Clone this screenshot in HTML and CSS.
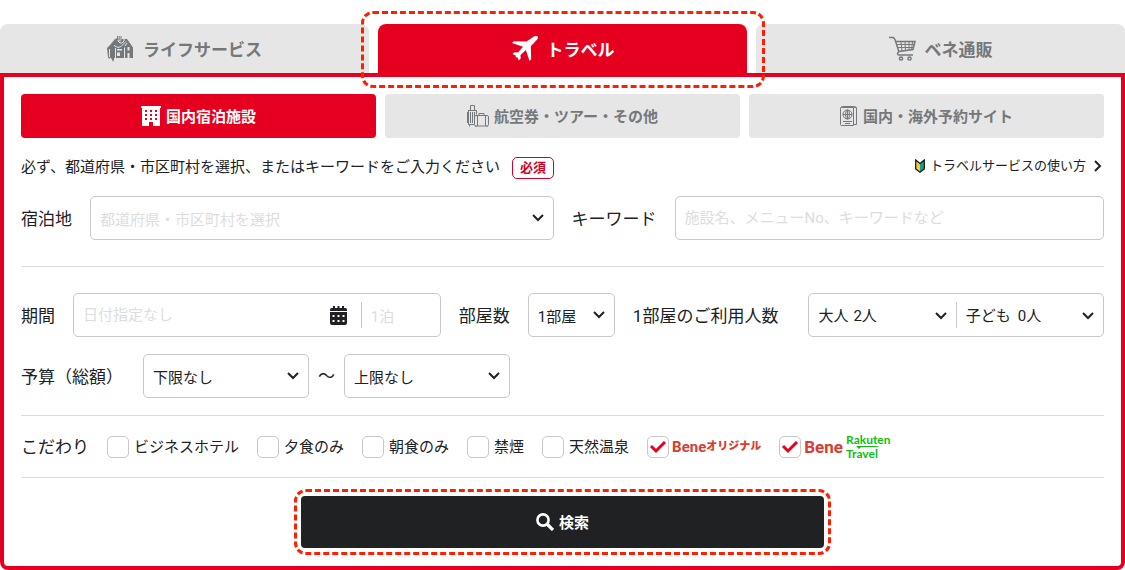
FILE: index.html
```html
<!DOCTYPE html>
<html lang="ja">
<head>
  <meta charset="UTF-8" />
  <meta name="viewport" content="width=device-width, initial-scale=1.0" />
  <title>トラベル検索</title>
  <link rel="stylesheet" href="styles.css">
</head>
<body>
  <nav class="tabs">
    <a href="#life" class="tab">
      <svg class="tab-icon" viewBox="0 0 27 26" aria-hidden="true">
        <path fill="currentColor" d="M0 12l3-3 5-6 3-1 2 4 2-3 5 0 6 8.500V22h-3.500v-5h-2v5H7v1.500L6 26l-1-2.500-1.500-2L2 23l-1-2z"/>
        <path fill="#e6e6e6" d="M20.500 11h2v3.500h-2zM10 13h5v1.500h-5zM10 16.500h3V20h-3z"/>
        <path d="M2.500 13v8M8.500 12v10M17.500 11.500V22M7 9.500l4 2 3-1 5-5M11 2v3l2 2h2l2-2V2M20 7l-2 3" fill="none" stroke="#e6e6e6"/>
        <path d="M10.500 0v4M14 0v5M12.200 0v4" fill="none" stroke="currentColor"/>
      </svg>
      <span>ライフサービス</span>
    </a>
    <a href="#travel" class="tab active">
      <svg class="tab-icon" viewBox="0 0 27 26" aria-hidden="true">
        <path fill="currentColor" d="M26 0c1.200.3 1.200 2 .2 3.400l-6.400 6.800.4 13-1.700 1.800-3.600-11-5.400 5 .2 3.500-1.900 2-1.600-3.500-.8.6-.9-.8.6-1L1.500 18l1.800-1.700 3.700.1 5-5.600L1 7l1.800-1.700 12.700.2 7-4.700C23.700.1 25.200-.2 26 0z"/>
      </svg>
      <span>トラベル</span>
    </a>
    <a href="#shop" class="tab">
      <svg class="tab-icon" viewBox="0 0 27 26" fill="none" stroke="currentColor" stroke-width="1.500" aria-hidden="true">
        <path d="M0 1.500h4.500l1.500 2 4 12.500M7 5.500h19l-2 8-14 2M10 16c-2 .5-2 3 0 3h14"/>
        <path stroke-width="1" d="M8 8.500h17M9 11.500h15.500M12 6l1 9M16 6l.5 9M20 6v8M23.500 6l-1 8"/>
        <circle cx="12" cy="22.500" r="1.600"/><circle cx="20.500" cy="22.500" r="1.600"/>
      </svg>
      <span>ベネ通販</span>
    </a>
  </nav>

  <main class="panel">
    <nav class="subtabs">
      <a href="#hotel" class="subtab active">
        <svg class="icon-building" viewBox="0 0 20 20" aria-hidden="true">
          <path fill="currentColor" fill-rule="evenodd" d="M0 0h20v2h-1v18h-7v-4H8v4H1V2H0zM4 4v2h2V4zM9 4v2h2V4zM14 4v2h2V4zM4 8v2h2V8zM9 8v2h2V8zM14 8v2h2V8zM4 12v2h2v-2zM9 12v2h2v-2zM14 12v2h2v-2z"/>
        </svg>
        <span>国内宿泊施設</span>
      </a>
      <a href="#air" class="subtab">
        <svg class="icon-luggage" viewBox="0 0 22 22" fill="none" stroke="currentColor" aria-hidden="true">
          <path d="M3.500 5V.5h4V5M1.500 5.500h8v3M1.500 5v14.500H7M.5 7v11M3.500 7v11M5.500 7v11M7.500 7v11M2.500 19.500v2M9.500 5.500v4"/>
          <rect x="7.500" y="10.500" width="14" height="10.500" rx="1.500"/>
          <path d="M12 10.500v-2h5v2M10.500 10.500V21M18.500 10.500V21M9 21v1M20 21v1"/>
        </svg>
        <span>航空券・ツアー・その他</span>
      </a>
      <a href="#site" class="subtab">
        <svg class="icon-passport" viewBox="0 0 18 20" fill="none" stroke="currentColor" aria-hidden="true">
          <path d="M1.500 1.500h12v18h-12q-1 0-1-1v-16q0-2 2-2h12l2 1v17h-3M14 1.500h2"/>
          <circle cx="7.500" cy="8.500" r="4.500"/><ellipse cx="7.500" cy="8.500" rx="2" ry="4.500"/>
          <path d="M3 8.500h9M7.500 4v9M3 15.500h9M5 17.500h5"/>
        </svg>
        <span>国内・海外予約サイト</span>
      </a>
    </nav>

    <form class="search" onsubmit="return false">
      <div class="notice">
        <p>必ず、都道府県・市区町村を選択、またはキーワードをご入力ください<span class="required">必須</span></p>
        <a href="#guide" class="guide">
          <svg class="icon-beginner" viewBox="0 0 10 14" aria-hidden="true">
            <path fill="#f8c63d" d="M.7 1L5 4.500V13L.7 10z"/><path fill="#16a085" d="M9.300 1L5 4.500V13l4.300-3z"/>
            <path fill="none" stroke="#111" stroke-width="1.200" d="M.7 1L5 4.500 9.300 1v9L5 13.200.7 10z"/>
          </svg>
          <span>トラベルサービスの使い方</span>
          <svg class="icon-next" viewBox="0 0 8 12" fill="none" stroke="currentColor" stroke-width="2" aria-hidden="true"><path d="M1 1l5 5-5 5"/></svg>
        </a>
      </div>

      <div class="row place-row">
        <label for="place">宿泊地</label>
        <select id="place" class="box place empty"><option>都道府県・市区町村を選択</option></select>
        <label for="keyword">キーワード</label>
        <input id="keyword" class="box keyword" type="text" placeholder="施設名、メニューNo、キーワードなど">
      </div>

      <div class="section">
        <div class="row">
          <label for="date">期間</label>
          <div class="box group period">
            <input id="date" type="text" placeholder="日付指定なし">
            <svg class="icon-calendar" viewBox="0 0 17 19" aria-hidden="true">
              <path fill="currentColor" fill-rule="evenodd" d="M3 0h2v2h2.500V0h2v2H12V0h2v2h1.500Q17 2 17 4v1H0V4q0-2 1.500-2H3zM0 6h17v11q0 2-2 2H2q-2 0-2-2zM2.500 9v2h2V9zM7.500 9v2h2V9zM12.500 9v2h2V9zM2.500 14v2h2v-2zM7.500 14v2h2v-2zM12.500 14v2h2v-2z"/>
            </svg>
            <input class="nights" type="text" placeholder="1泊" aria-label="泊数">
          </div>
          <label for="rooms">部屋数</label>
          <select id="rooms" class="box rooms"><option>1部屋</option></select>
          <label for="adults" class="guests-label">1部屋のご利用人数</label>
          <div class="box group guests">
            <label class="guest">大人<select id="adults"><option>2人</option></select></label>
            <label class="guest child">子ども<select><option>0人</option></select></label>
          </div>
        </div>
        <div class="row">
          <label for="min" class="budget-label">予算（総額）</label>
          <div class="range">
            <select id="min" class="box price"><option>下限なし</option></select>
            <span>～</span>
            <select class="box price" aria-label="上限"><option>上限なし</option></select>
          </div>
        </div>
      </div>

      <fieldset class="options">
        <span class="options-title">こだわり</span>
        <label><input type="checkbox">ビジネスホテル</label>
        <label><input type="checkbox">夕食のみ</label>
        <label><input type="checkbox">朝食のみ</label>
        <label><input type="checkbox">禁煙</label>
        <label><input type="checkbox">天然温泉</label>
        <label class="brand"><input type="checkbox" checked><span class="bene">Bene<small>オリジナル</small></span></label>
        <label class="brand"><input type="checkbox" checked><span class="bene-travel">Bene</span><span class="rakuten"><span>Rakuten</span><span>Travel</span>
          <svg class="swoosh" viewBox="0 0 24 3" aria-hidden="true"><path fill="currentColor" d="M0 0h24l-4 1H5L3 3z"/></svg></span></label>
      </fieldset>

      <div class="submit">
        <button type="submit">
          <svg class="icon-search" viewBox="0 0 18 18" fill="none" stroke="currentColor" aria-hidden="true">
            <circle cx="7" cy="7" r="5.600" stroke-width="2.600"/><path d="M11 11l6 6" stroke-width="3.200"/>
          </svg>
          <span>検索</span>
        </button>
      </div>
    </form>
  </main>
</body>
</html>
```
FILE: styles.css
```css
* {
  box-sizing: border-box;
}
body {
  margin: 0;
  padding-top: 24px;
  font-family: Roboto, "Noto Sans CJK JP", sans-serif;
  font-size: 15px;
  line-height: 22px;
  color: #202124;
  background: #fff;
}
a {
  color: inherit;
  text-decoration: none;
}
svg {
  display: block;
  flex: none;
}
input, select, button {
  font: inherit;
  color: inherit;
}

/* tabs */
.tabs {
  display: flex;
  gap: 9px;
}
.tab {
  position: relative;
  flex: 1;
  display: flex;
  align-items: center;
  justify-content: center;
  gap: 9px;
  height: 49px;
  border-radius: 8px 8px 0 0;
  background: #e6e6e6;
  color: #75787b;
  font-size: 17px;
  font-weight: bold;
}
.tab span, .subtab span, .submit span {
  padding-top: 2px;
}
.tab.active, .subtab.active {
  background: #e60020;
  color: #fff;
}
.tab.active::after, .submit button::after {
  content: "";
  position: absolute;
  border: 3px dashed #ff1e00;
  border-radius: 12px;
  pointer-events: none;
}
.tab.active::after {
  inset: -13px -18px -15px -17px;
  z-index: 1;
}
.tab-icon {
  width: 27px;
  height: 26px;
}

.panel {
  padding: 17px 17px 18px;
  border: 4px solid #e60020;
  border-radius: 0 0 8px 8px;
}
.subtabs {
  display: flex;
  gap: 9px;
}
.subtab {
  flex: 1;
  display: flex;
  align-items: center;
  justify-content: center;
  gap: 5px;
  height: 44px;
  border-radius: 4px;
  background: #e6e6e6;
  color: #75787b;
  font-weight: bold;
}
.icon-building { width: 20px; height: 20px; }
.icon-luggage { width: 22px; height: 22px; }
.icon-passport { width: 18px; height: 20px; }

/* notice */
.notice {
  display: flex;
  justify-content: space-between;
  padding: 19px 0 17px;
}
.notice p {
  display: flex;
  gap: 12px;
  margin: 0;
  line-height: 20px;
}
.required {
  padding: 0 7px;
  border: 1px solid #d7002a;
  border-radius: 5px;
  color: #d7002a;
  font-size: 13px;
  font-weight: bold;
}
.guide {
  display: flex;
  align-items: center;
  gap: 5px;
  padding-right: 2px;
  font-size: 13px;
  line-height: 18px;
  height: 18px;
}
.icon-beginner { width: 10px; height: 14px; }
.icon-next { width: 8px; height: 12px; margin-left: 3px; }

/* fields */
.row {
  display: flex;
  align-items: center;
  gap: 18px;
}
.row > label, .range, .options-title {
  font-size: 17px;
  white-space: nowrap;
}
.row > label {
  padding-top: 2px;
}
.box {
  height: 44px;
  min-width: 0;
  padding: 0 9px;
  border: 1px solid #c8c8c8;
  border-radius: 5px;
  background-color: #fff;
  font-size: 15px;
}
select {
  appearance: none;
  background: url("data:image/svg+xml,%3Csvg xmlns='http://www.w3.org/2000/svg' width='12' height='8' fill='none' stroke='%23202124' stroke-width='2'%3E%3Cpath d='M1 1l5 5 5-5'/%3E%3C/svg%3E") no-repeat right 9px center;
  outline: none;
}
select.box {
  padding-top: 3px;
}
.empty, ::placeholder {
  color: #dcdddf;
  opacity: 1;
}
.place { flex: 13; }
.keyword { flex: 12; }
.place-row {
  padding-bottom: 26px;
}
.section {
  display: flex;
  flex-direction: column;
  gap: 17px;
  padding: 26px 0 17px;
  border: solid #dcdcdc;
  border-width: 1px 0;
}
.group {
  display: flex;
  align-items: center;
}
.group input, .group select {
  min-width: 0;
  padding: 0;
  border: 0;
  outline: none;
}
.period { flex: 11; }
.period input:first-child { flex: 1; }
.icon-calendar {
  width: 17px;
  height: 19px;
  margin-right: 14px;
}
.group .nights, .guest.child {
  border-left: 1px solid #c8c8c8;
  padding-left: 9px;
}
.group .nights {
  width: 70px;
  height: 26px;
  padding-top: 3px;
}
.rooms {
  width: 87px;
}
.row > .guests-label {
  padding-right: 12px;
}
.guests {
  flex: 9;
  padding-right: 0;
}
.guest {
  flex: 1;
  display: flex;
  align-items: center;
  gap: 5px;
  height: 26px;
  padding-top: 2px;
}
.guest.child {
  gap: 7px;
}
.guest select {
  flex: 1;
  height: 26px;
}
.budget-label {
  min-width: 104px;
}
.range {
  display: flex;
  align-items: center;
  gap: 9px;
}
.price {
  width: 166px;
}

/* options */
.options {
  display: flex;
  align-items: center;
  gap: 18px;
  height: 62px;
  margin: 0;
  padding: 0;
  border: 0;
  border-bottom: 1px solid #dcdce0;
}
.options label {
  display: flex;
  align-items: center;
  gap: 5px;
  white-space: nowrap;
}
.options .brand {
  gap: 3px;
}
.options input {
  appearance: none;
  width: 22px;
  height: 22px;
  margin: 0;
  border: 1px solid #c8c8c8;
  border-radius: 5px;
}
.options input:checked {
  background: url("data:image/svg+xml,%3Csvg xmlns='http://www.w3.org/2000/svg' width='18' height='14' fill='none' stroke='%23e60020' stroke-width='3'%3E%3Cpath d='M2 6l5 5 9-9'/%3E%3C/svg%3E") no-repeat center;
}
.bene, .bene-travel {
  color: #dc3b2f;
  font-weight: bold;
}
.bene {
  display: flex;
  align-items: center;
}
.bene small {
  font-size: 11px;
  font-weight: 900;
}
.bene-travel {
  font-size: 17px;
}
.rakuten {
  position: relative;
  display: flex;
  flex-direction: column;
  color: #0bbf10;
  font-family: Lato, sans-serif;
  font-size: 12px;
  font-weight: bold;
  line-height: 14px;
}
.swoosh {
  position: absolute;
  left: 10px;
  top: 13px;
  width: 24px;
  height: 3px;
}

/* submit */
.submit {
  display: flex;
  justify-content: center;
  padding-top: 18px;
}
.submit button {
  position: relative;
  display: flex;
  align-items: center;
  justify-content: center;
  gap: 5px;
  width: 48.3%;
  height: 52px;
  border: 0;
  border-radius: 4px;
  background: #202123;
  color: #fff;
  font-weight: bold;
}
.submit button::after {
  inset: -7px;
}
.icon-search { width: 18px; height: 18px; }
```
